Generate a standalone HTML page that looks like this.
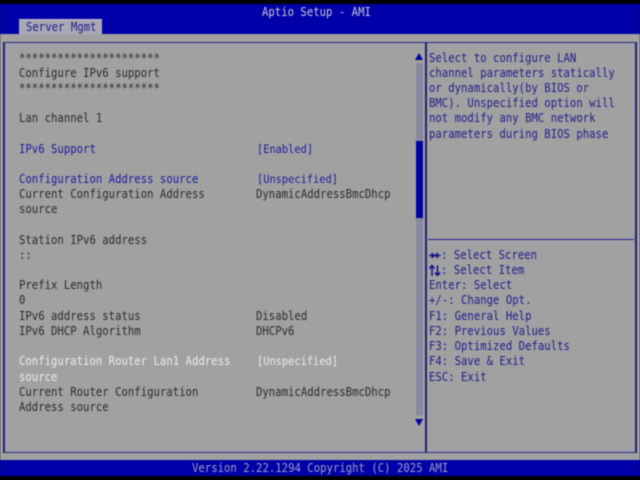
<!DOCTYPE html>
<html><head><meta charset="utf-8"><style>
html,body{margin:0;padding:0;width:640px;height:480px;overflow:hidden;background:#000}
#r{position:relative;width:640px;height:480px;overflow:hidden;background:#a1a1a1;font-family:"DejaVu Sans Mono","Liberation Mono",monospace;font-size:10.65px;line-height:13px;color:#2c2c2c;filter:blur(.4px)}
#r div{position:absolute}
.t{white-space:pre;letter-spacing:0;transform:translateY(-.4px) scaleY(1.13);transform-origin:0 50%}
.w{color:#ececec}
.e{color:#1c1ca0}
.h{color:#20208c}
.n{font-size:10.35px!important;margin-top:.5px}
</style></head><body><div id="r">
<div style="left:0;top:0;width:640px;height:4px;background:#000"></div>
<div style="left:0;top:4px;width:640px;height:30px;background:#0000a8"></div>
<div class="t" style="left:262px;top:6px;color:#c8c8d8">Aptio Setup - AMI</div>
<div style="left:19px;top:19px;width:83px;height:16px;background:#a8a8b4;border-top:1px solid #c0c0d0;box-sizing:border-box"></div>
<div class="t h" style="left:26px;top:21px">Server Mgmt</div>

<div style="left:3px;top:42px;width:634px;height:411px;box-sizing:border-box;border:1px solid #2a2a80;border-left:2px solid #22226e;border-right:2px solid #22226e;outline:1px solid #9a9ac0;outline-offset:-3px"></div>
<div style="left:425px;top:42px;width:2px;height:411px;background:#22226e"></div>
<div style="left:428px;top:239px;width:206px;height:1px;background:#22228a"></div>

<div style="left:416px;top:63px;width:7px;height:352px;background:repeating-linear-gradient(0deg,#7c7c9c 0 1px,#9494a8 1px 2px)"></div>
<div style="left:416px;top:141px;width:7px;height:77px;background:#0000a8"></div>
<div style="left:415px;top:53px;width:0;height:0;border-left:4px solid transparent;border-right:4px solid transparent;border-bottom:7px solid #0000a8"></div>
<div style="left:415px;top:419px;width:0;height:0;border-left:4px solid transparent;border-right:4px solid transparent;border-top:7px solid #0000a8"></div>

<div class="t" style="left:19px;top:52px">**********************</div>
<div class="t" style="left:19px;top:67px">Configure IPv6 support</div>
<div class="t" style="left:19px;top:82px">**********************</div>
<div class="t" style="left:19px;top:112px">Lan channel 1</div>
<div class="t e" style="left:19px;top:143px">IPv6 Support</div>
<div class="t e n" style="left:257px;top:143px">[Enabled]</div>
<div class="t e" style="left:19px;top:173px">Configuration Address source</div>
<div class="t e n" style="left:257px;top:173px">[Unspecified]</div>
<div class="t" style="left:19px;top:188px">Current Configuration Address</div>
<div class="t" style="left:256px;top:188px">DynamicAddressBmcDhcp</div>
<div class="t" style="left:19px;top:203px">source</div>
<div class="t" style="left:19px;top:234px">Station IPv6 address</div>
<div class="t" style="left:19px;top:249px">::</div>
<div class="t" style="left:19px;top:279px">Prefix Length</div>
<div class="t" style="left:19px;top:294px">0</div>
<div class="t" style="left:19px;top:310px">IPv6 address status</div>
<div class="t" style="left:256px;top:310px">Disabled</div>
<div class="t" style="left:19px;top:325px">IPv6 DHCP Algorithm</div>
<div class="t" style="left:256px;top:325px">DHCPv6</div>
<div class="t w" style="left:19px;top:355px">Configuration Router Lan1 Address</div>
<div class="t w n" style="left:257px;top:355px">[Unspecified]</div>
<div class="t w" style="left:19px;top:371px">source</div>
<div class="t" style="left:19px;top:386px">Current Router Configuration</div>
<div class="t" style="left:256px;top:386px">DynamicAddressBmcDhcp</div>
<div class="t" style="left:19px;top:401px">Address source</div>

<div class="t h" style="left:429px;top:52px">Select to configure LAN</div>
<div class="t h" style="left:429px;top:67px">channel parameters statically</div>
<div class="t h" style="left:429px;top:82px">or dynamically(by BIOS or</div>
<div class="t h" style="left:429px;top:97px">BMC). Unspecified option will</div>
<div class="t h" style="left:429px;top:112px">not modify any BMC network</div>
<div class="t h" style="left:429px;top:128px">parameters during BIOS phase</div>

<svg style="position:absolute;left:429px;top:250px" width="14" height="26" viewBox="0 0 14 26"><g fill="none" stroke="#10108c" stroke-width="1.5"><path d="M0 5.5H11.5M2.5 3L5 5.5L2.5 8M9 3L6.5 5.5L9 8"/><path d="M3 26V16M0.5 18.5L3 15.5L5.5 18.5M8.5 15.5V25M6 22.5L8.5 25.5L11 22.5"/></g></svg>
<div class="t h" style="left:441px;top:249px">: Select Screen</div>
<div class="t h" style="left:441px;top:264px">: Select Item</div>
<div class="t h" style="left:429px;top:279px">Enter: Select</div>
<div class="t h" style="left:429px;top:294px">+/-: Change Opt.</div>
<div class="t h" style="left:429px;top:310px">F1: General Help</div>
<div class="t h" style="left:429px;top:325px">F2: Previous Values</div>
<div class="t h" style="left:429px;top:340px">F3: Optimized Defaults</div>
<div class="t h" style="left:429px;top:355px">F4: Save &amp; Exit</div>
<div class="t h" style="left:429px;top:371px">ESC: Exit</div>

<div style="left:0;top:460px;width:640px;height:16px;background:#0000a8"></div>
<div style="left:0;top:476px;width:640px;height:4px;background:#000"></div>
<div class="t" style="left:192px;top:462px;color:#9c9cc4">Version 2.22.1294 Copyright (C) 2025 AMI</div>
</div></body></html>
